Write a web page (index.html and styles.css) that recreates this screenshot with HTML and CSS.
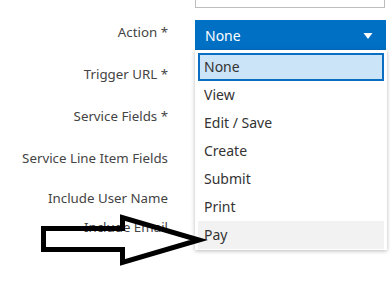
FILE: index.html
```html
<!DOCTYPE html>
<html lang="en">
<head>
  <meta charset="UTF-8">
  <title>Action field</title>
  <link rel="stylesheet" href="styles.css">
</head>
<body>
  <div class="form">
    <div class="row">
      <div class="label"></div>
      <div class="field"><div class="textbox"></div></div>
    </div>
    <div class="row">
      <div class="label">Action *</div>
      <div class="field">
        <div class="select">
          <span>None</span>
          <svg class="caret" width="10" height="8" viewBox="0 0 10 8"><polygon points="0.5,1 9.5,1 5,7" fill="#fff"/></svg>
        </div>
      </div>
    </div>
    <div class="row">
      <div class="label">Trigger URL *</div>
      <div class="field"><div class="textbox"></div></div>
    </div>
    <div class="row">
      <div class="label">Service Fields *</div>
      <div class="field"><div class="textbox"></div></div>
    </div>
    <div class="row">
      <div class="label">Service Line Item Fields</div>
      <div class="field"><div class="textbox"></div></div>
    </div>
    <div class="row check-row">
      <div class="label">Include User Name</div>
      <div class="field"></div>
    </div>
    <div class="row check-row">
      <div class="label">Include Email</div>
      <div class="field"></div>
    </div>
  </div>

  <!-- open list of the Action select -->
  <ul class="options">
    <li class="selected">None</li>
    <li>View</li>
    <li>Edit / Save</li>
    <li>Create</li>
    <li>Submit</li>
    <li>Print</li>
    <li class="hover">Pay</li>
  </ul>

  <!-- hand-drawn pointer -->
  <svg class="pointer" width="390" height="284" viewBox="0 0 390 284">
    <polygon points="43.5,228.5 122.5,228.5 122.5,217.5 199,240 122.5,262.5 122.5,249.5 43.5,249.5"
      fill="none" stroke="#000" stroke-width="5" stroke-linejoin="miter"/>
  </svg>
</body>
</html>
```

FILE: styles.css
```css
body {
  margin: 0;
  padding: 0;
  width: 390px;
  height: 284px;
  overflow: hidden;
  position: relative;
  background: #fff;
  font-family: 'Noto Sans', 'Open Sans', Arial, sans-serif;
  font-size: 13.3px;
  color: #444;
}
.form {
  margin-top: -22px;
  display: flex;
  flex-direction: column;
  gap: 12px;
}
.row {
  display: flex;
  gap: 27px;
}
.label {
  width: 168px;
  flex: none;
  text-align: right;
  line-height: 20px;
  padding-top: 2px;
  white-space: nowrap;
}
.check-row {
  height: 29px;
  margin-bottom: -12px;
}
.check-row .label {
  padding-top: 0;
}
.field {
  width: 195px;
  flex: none;
}
.textbox {
  height: 28px;
  border: 1px solid #bdbdbd;
  margin-right: 5px;
  background: #fff;
}
.select {
  height: 30px;
  width: 191px;
  background: #0070c4;
  color: #fff;
  display: flex;
  align-items: center;
  justify-content: space-between;
  padding: 0 13px 0 10px;
  box-sizing: border-box;
  font-size: 14px;
}
.caret {
  display: block;
  margin-top: 1px;
}
.options {
  position: absolute;
  left: 195px;
  top: 50px;
  width: 192px;
  height: 200px;
  box-sizing: border-box;
  margin: 0;
  padding: 3px 3px 1px 3px;
  list-style: none;
  background: #fff;
  box-shadow: 0 1px 4px rgba(0,0,0,0.28);
  color: #333;
  font-size: 14px;
}
.options li {
  height: 28px;
  line-height: 28px;
  padding-left: 6px;
  box-sizing: border-box;
}
.options .selected {
  background: #cce4f7;
  border: 2px solid #0a6fc2;
  line-height: 24px;
  padding-left: 4px;
}
.options .hover {
  background: #f2f2f2;
}
.pointer {
  position: absolute;
  left: 0;
  top: 0;
}
```
